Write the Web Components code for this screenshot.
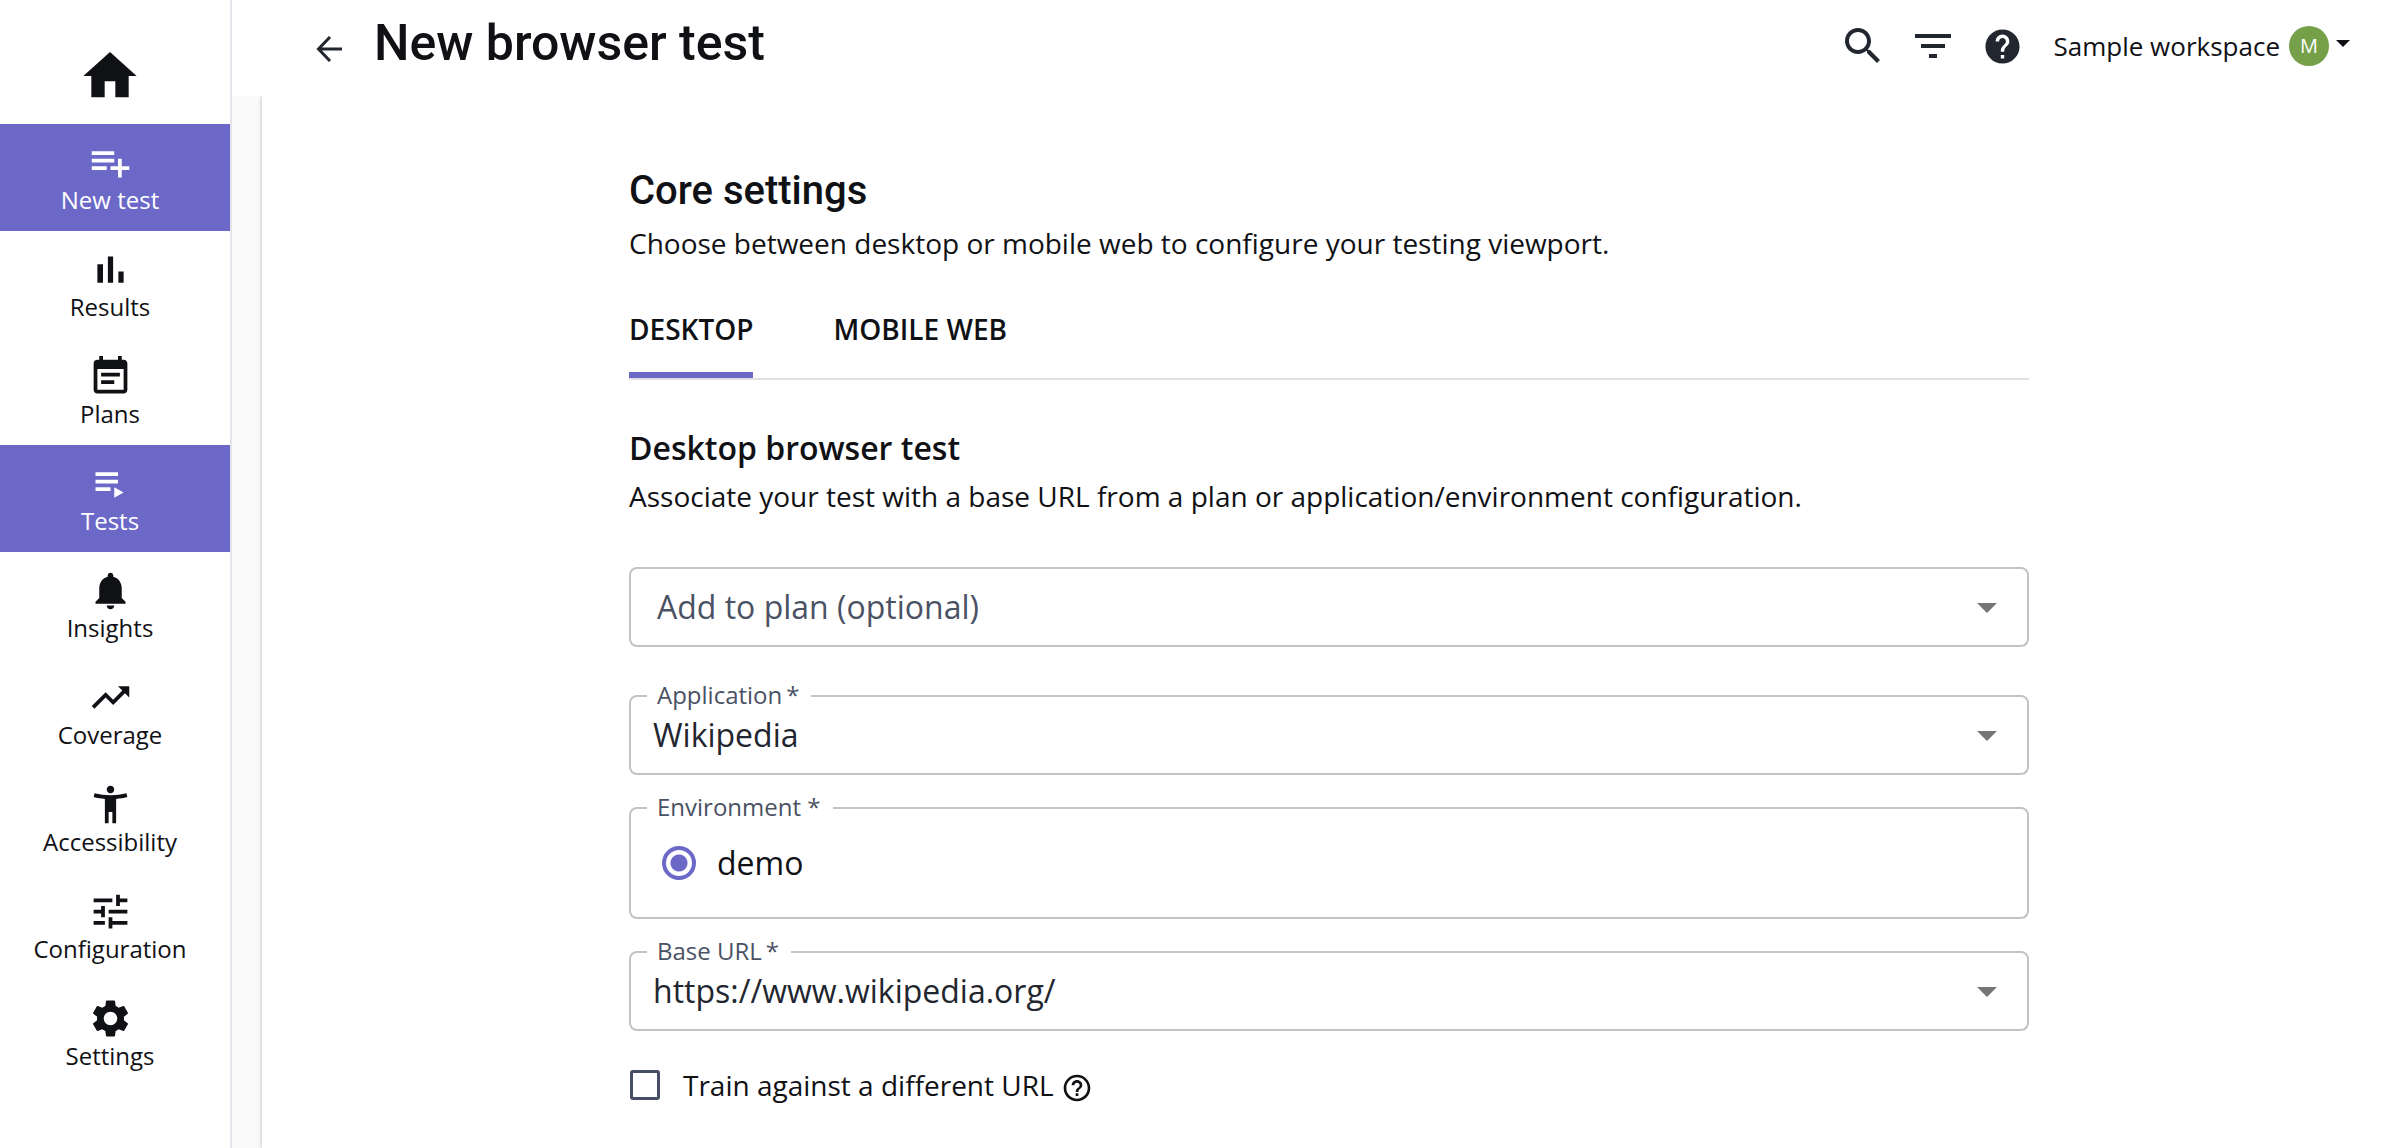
<!DOCTYPE html>
<html lang="en">
<head>
<meta charset="utf-8">
<meta name="viewport" content="width=device-width, initial-scale=1">
<title>New browser test</title>
<style>
  body {
    margin: 0;
    background: #fff;
    color: #101115;
    font-family: "Open Sans", sans-serif;
    font-size: 28px;
    line-height: 40px;
    --accent: #6b68c8;
    --muted: #4a5264;
    --ink: #22262f;
    --display: Roboto, sans-serif;
  }
</style>
</head>
<body>
<app-shell>
  <side-nav slot="nav">
    <nav-item icon="add" active>New test</nav-item>
    <nav-item icon="results">Results</nav-item>
    <nav-item icon="plans">Plans</nav-item>
    <nav-item icon="tests" active>Tests</nav-item>
    <nav-item icon="bell">Insights</nav-item>
    <nav-item icon="trend">Coverage</nav-item>
    <nav-item icon="person">Accessibility</nav-item>
    <nav-item icon="tune">Configuration</nav-item>
    <nav-item icon="gear">Settings</nav-item>
  </side-nav>
  <top-bar slot="header" initial="M">
    New browser test
    <span slot="workspace">Sample workspace</span>
  </top-bar>
  <settings-section level="1">
    <span slot="title">Core settings</span>
    <span slot="text">Choose between desktop or mobile web to configure your testing viewport.</span>
  </settings-section>
  <tab-bar tabs="DESKTOP|MOBILE WEB"></tab-bar>
  <settings-section level="2">
    <span slot="title">Desktop browser test</span>
    <span slot="text">Associate your test with a base URL from a plan or application/environment configuration.</span>
  </settings-section>
  <form-stack>
    <select-field slot="plan" placeholder="Add to plan (optional)"></select-field>
    <select-field label="Application&#8201;*" value="Wikipedia"></select-field>
    <radio-field label="Environment *" value="demo"></radio-field>
    <select-field label="Base URL&#8201;*" value="https://www.wikipedia.org/"></select-field>
  </form-stack>
  <check-field>Train against a different URL</check-field>
</app-shell>

<script>
const ICONS = {
  home: 'M10 20v-6h4v6h5v-8h3L12 3 2 12h3v8z',
  add: 'M14 10H2v2h12v-2zm0-4H2v2h12V6zm4 8v-4h-2v4h-4v2h4v4h2v-4h4v-2h-4zM2 16h8v-2H2v2z',
  results: 'M5 9.2h3V19H5zM10.6 5h2.8v14h-2.8zm5.6 8H19v6h-2.8z',
  plans: 'M17 10H7v2h10v-2zm2-7h-1V1h-2v2H8V1H6v2H5c-1.11 0-1.99.9-1.99 2L3 19c0 1.1.89 2 2 2h14c1.1 0 2-.9 2-2V5c0-1.1-.9-2-2-2zm0 16H5V8h14v11zm-5-5H7v2h7v-2z',
  tests: 'M4 10h12v2H4zm0-4h12v2H4zm0 8h8v2H4zm10 0v5.6l5-2.8z',
  bell: 'M12 22c1.1 0 2-.9 2-2h-4c0 1.1.89 2 2 2zm6-6v-5c0-3.07-1.64-5.64-4.5-6.32V4c0-.83-.67-1.5-1.5-1.5s-1.5.67-1.5 1.5v.68C7.63 5.36 6 7.92 6 11v5l-2 2v1h16v-1l-2-2z',
  trend: 'M16 6l2.29 2.29-4.88 4.88-4-4L2 16.59 3.41 18l6-6 4 4 6.3-6.29L22 12V6z',
  person: 'M20.5 6c-2.61.7-5.67 1-8.5 1s-5.89-.3-8.5-1L3 8c1.86.5 4 .83 6 1v13h2v-6h2v6h2V9c2-.17 4.14-.5 6-1l-.5-2zM12 6c1.1 0 2-.9 2-2s-.9-2-2-2-2 .9-2 2 .9 2 2 2z',
  tune: 'M3 17v2h6v-2H3zM3 5v2h10V5H3zm10 16v-2h8v-2h-8v-2h-2v6h2zM7 9v2H3v2h4v2h2V9H7zm14 4v-2H11v2h10zm-6-4h2V7h4V5h-4V3h-2v6z',
  gear: 'M19.14 12.94c.04-.3.06-.61.06-.94 0-.32-.02-.64-.07-.94l2.03-1.58c.18-.14.23-.41.12-.61l-1.92-3.32c-.12-.22-.37-.29-.59-.22l-2.39.96c-.5-.38-1.03-.7-1.62-.94l-.36-2.54c-.04-.24-.24-.41-.48-.41h-3.84c-.24 0-.43.17-.47.41l-.36 2.54c-.59.24-1.13.57-1.62.94l-2.39-.96c-.22-.08-.47 0-.59.22L2.74 8.87c-.12.21-.08.47.12.61l2.03 1.58c-.05.3-.09.63-.09.94s.02.64.07.94l-2.03 1.58c-.18.14-.23.41-.12.61l1.92 3.32c.12.22.37.29.59.22l2.39-.96c.5.38 1.03.7 1.62.94l.36 2.54c.05.24.24.41.48.41h3.84c.24 0 .44-.17.47-.41l.36-2.54c.59-.24 1.13-.56 1.62-.94l2.39.96c.22.08.47 0 .59-.22l1.92-3.32c.12-.22.07-.47-.12-.61l-2.01-1.58zM12 15.6c-1.98 0-3.6-1.62-3.6-3.6s1.62-3.6 3.6-3.6 3.6 1.62 3.6 3.6-1.62 3.6-3.6 3.6z',
  search: 'M15.5 14h-.79l-.28-.27C15.41 12.59 16 11.11 16 9.5 16 5.91 13.09 3 9.5 3S3 5.91 3 9.5 5.91 16 9.5 16c1.61 0 3.09-.59 4.23-1.57l.27.28v.79l5 4.99L20.49 19l-4.99-5zm-6 0C7.01 14 5 11.99 5 9.5S7.01 5 9.5 5 14 7.01 14 9.5 11.99 14 9.5 14z',
  filter: 'M10 18h4v-2h-4v2zM3 6v2h18V6H3zm3 7h12v-2H6v2z',
  help: 'M12 2C6.48 2 2 6.48 2 12s4.48 10 10 10 10-4.48 10-10S17.52 2 12 2zm1 17h-2v-2h2v2zm2.07-7.75l-.9.92C13.45 12.9 13 13.5 13 15h-2v-.5c0-1.1.45-2.1 1.17-2.83l1.24-1.26c.37-.36.59-.86.59-1.41 0-1.1-.9-2-2-2s-2 .9-2 2H8c0-2.21 1.79-4 4-4s4 1.79 4 4c0 .88-.36 1.68-.93 2.25z',
  helpOutline: 'M11 18h2v-2h-2v2zm1-16C6.48 2 2 6.48 2 12s4.48 10 10 10 10-4.48 10-10S17.52 2 12 2zm0 18c-4.41 0-8-3.59-8-8s3.59-8 8-8 8 3.59 8 8-3.59 8-8 8zm0-14c-2.21 0-4 1.79-4 4h2c0-1.1.9-2 2-2s2 .9 2 2c0 2-3 1.75-3 5h2c0-2.25 3-2.5 3-5 0-2.21-1.79-4-4-4z'
};
const icon = (name, size) =>
  `<svg width="${size}" height="${size}" viewBox="0 0 24 24" fill="currentColor" aria-hidden="true"><path d="${ICONS[name]}"/></svg>`;

const BASE = `
  *, *::before { box-sizing: border-box; }
  svg { display: block; flex: none; }
  button { font: inherit; color: inherit; background: none; border: 0; padding: 0; margin: 0; cursor: pointer; }
`;

function define(name, render) {
  customElements.define(name, class extends HTMLElement {
    constructor() {
      super();
      this.attachShadow({ mode: 'open' });
    }
    connectedCallback() {
      this.shadowRoot.innerHTML = `<style>${BASE}</style>` + render(this);
    }
  });
}

define('app-shell', () => `
  <style>
    :host { display: flex; min-height: 100vh; background: #fff; }
    .page { flex: 1; min-width: 0; display: flex; flex-direction: column; background: #fafafa; }
    main { flex: 1; margin-left: 30px; padding: 71px 24px 24px; background: #fff; box-shadow: 0 0 4px rgba(0, 0, 0, .28); clip-path: inset(0 0 0 -8px); }
    .column { max-width: 1400px; margin: 0 auto; }
  </style>
  <slot name="nav"></slot>
  <div class="page">
    <slot name="header"></slot>
    <main><div class="column"><slot></slot></div></main>
  </div>`);

define('side-nav', () => `
  <style>
    :host { display: block; flex: none; width: 232px; border-right: 2px solid #e4e4ea; background: #fff; box-sizing: border-box; }
    .home { display: flex; justify-content: center; padding: 44px 10px 16px 0; color: #101115; }
  </style>
  <a class="home" href="#home" aria-label="Home">${icon('home', 64)}</a>
  <nav><slot></slot></nav>`);

define('nav-item', el => `
  <style>
    :host { display: block; font-size: 24px; line-height: 30px; }
    a { display: flex; flex-direction: column; align-items: center; padding: 16px 10px 16px 0; color: #101115; text-decoration: none; }
    :host([active]) a { background: var(--accent); color: #fff; }
  </style>
  <a href="#">${icon(el.getAttribute('icon'), 45)}<span><slot></slot></span></a>`);

define('top-bar', el => `
  <style>
    :host { display: flex; justify-content: space-between; align-items: flex-start; height: 96px; padding: 0 46px 0 84px; background: #fff; box-sizing: border-box; }
    .lead { display: flex; align-items: center; gap: 32px; height: 86px; }
    .back { padding-top: 12px; color: var(--ink); }
    h1 { margin: 0; font: 500 50px/60px var(--display); }
    .tools { display: flex; align-items: center; gap: 22px; height: 92px; color: var(--ink); }
    .tool { display: grid; place-items: center; width: 48px; height: 48px; }
    .account { display: flex; align-items: center; margin-left: 5px; color: #101115; font-size: 26px; white-space: nowrap; }
    .avatar { display: grid; place-items: center; width: 40px; height: 40px; margin: 0 7px 0 9px; border-radius: 50%; background: #759f48; color: #fff; font-size: 20px; line-height: 40px; }
  </style>
  <div class="lead">
    <button class="back" aria-label="Back"><svg width="26" height="26" viewBox="0 0 26 26" fill="none" stroke="currentColor" stroke-width="3"><path d="M26 13H2M14 1 2.5 13 14 25"/></svg></button>
    <h1><slot></slot></h1>
  </div>
  <div class="tools">
    <button class="tool" aria-label="Search">${icon('search', 48)}</button>
    <button class="tool" aria-label="Filter">${icon('filter', 48)}</button>
    <button class="tool" aria-label="Help">${icon('help', 41)}</button>
    <button class="account"><slot name="workspace"></slot><span class="avatar">${el.getAttribute('initial')}</span><svg width="14" height="20" viewBox="0 0 14 20" aria-hidden="true"><path d="M0 4h14l-7 7z" fill="currentColor"/></svg></button>
  </div>`);

define('settings-section', el => {
  const tag = el.getAttribute('level') === '1' ? 'h2' : 'h3';
  return `
  <style>
    :host { display: block; }
    h2, h3, p { margin: 0; }
    h2 { font: 500 40px/48px var(--display); }
    h3 { font-size: 32px; line-height: 40px; font-weight: 600; }
    p { margin-top: 8px; }
  </style>
  <${tag}><slot name="title"></slot></${tag}>
  <p><slot name="text"></slot></p>`;
});

define('tab-bar', el => `
  <style>
    :host { display: block; margin: 46px 0 48px; }
    .tabs { display: flex; gap: 80px; border-bottom: 2px solid #e0e0e0; }
    button { padding-bottom: 23px; border-bottom: 6px solid transparent; font-weight: 600; line-height: 40px; }
    button[aria-selected="true"] { border-color: var(--accent); }
  </style>
  <div class="tabs" role="tablist">${el.getAttribute('tabs').split('|').map((t, i) =>
    `<button role="tab" aria-selected="${i === 0}">${t}</button>`).join('')}</div>`);

define('form-stack', () => `
  <style>
    :host { display: grid; gap: 48px; margin-top: 51px; }
    .group { display: grid; gap: 32px; }
  </style>
  <slot name="plan"></slot>
  <div class="group"><slot></slot></div>`);

const FIELD = `
  :host { display: block; position: relative; font-size: 32px; line-height: 40px; }
  .label { position: absolute; top: -12px; left: 18px; margin: 0; padding: 0 12px 0 10px; background: #fff; color: var(--muted); font-size: 24px; line-height: 24px; white-space: nowrap; }
  .box { display: flex; align-items: center; width: 100%; margin: 0; border: 2px solid #c3c3c3; border-radius: 8px; background: #fff; }
`;

define('select-field', el => {
  const label = el.getAttribute('label');
  const placeholder = el.getAttribute('placeholder');
  return `
  <style>${FIELD}
    select { appearance: none; height: 80px; padding: 0 80px 0 22px; font: inherit; color: var(--ink); }
    select.empty { padding-left: 26px; color: var(--muted); }
    svg { position: absolute; right: 32px; top: 36px; pointer-events: none; }
  </style>
  <select id="s" class="box ${placeholder ? 'empty' : ''}" ${placeholder ? `aria-label="${placeholder}"` : ''}>
    <option>${placeholder || el.getAttribute('value')}</option>
  </select>
  ${label ? `<label class="label" for="s">${label}</label>` : ''}
  <svg width="20" height="10" viewBox="0 0 20 10" aria-hidden="true"><path d="M0 0h20L10 10z" fill="#757575"/></svg>`;
});

define('radio-field', el => `
  <style>${FIELD}
    fieldset { height: 112px; padding: 0 31px; }
    .option { display: flex; align-items: center; gap: 21px; color: #101115; }
    input { appearance: none; width: 34px; height: 34px; margin: 0; border: 4px solid var(--accent); border-radius: 50%; background: radial-gradient(circle, var(--accent) 8px, transparent 9px); }
  </style>
  <fieldset class="box">
    <legend class="label">${el.getAttribute('label')}</legend>
    <label class="option"><input type="radio" name="env" checked>${el.getAttribute('value')}</label>
  </fieldset>`);

define('check-field', () => `
  <style>
    :host { display: flex; align-items: center; gap: 7px; margin-top: 34px; }
    label { display: flex; align-items: center; gap: 23px; }
    input { appearance: none; width: 30px; height: 30px; margin: 0 0 0 1px; border: 3px solid #454e63; border-radius: 3px; background: #fff; }
    button { padding-top: 6px; }
  </style>
  <label><input type="checkbox"><span><slot></slot></span></label>
  <button aria-label="About training URLs">${icon('helpOutline', 32)}</button>`);
</script>
</body>
</html>
